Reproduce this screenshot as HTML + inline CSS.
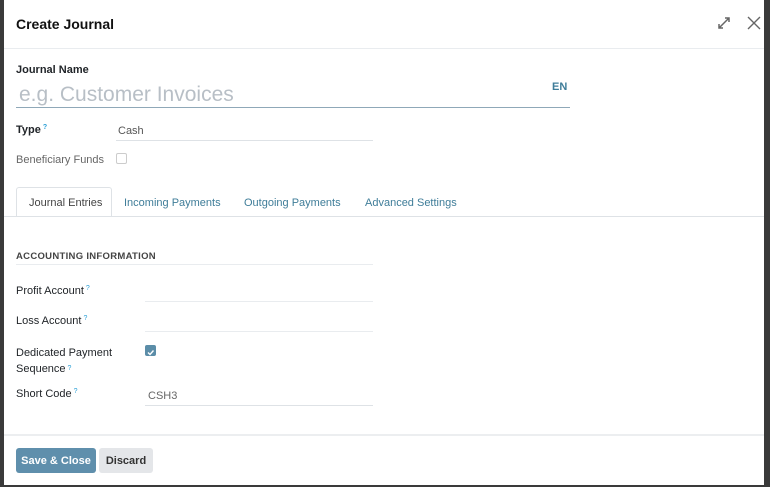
<!DOCTYPE html>
<html><head><style>
*{box-sizing:border-box;margin:0;padding:0}
body{width:770px;height:487px;background:#3a3a3a;font-family:"Liberation Sans",sans-serif;position:relative;overflow:hidden}
.m{position:absolute;left:4px;top:0;width:760px;height:485px;background:#fff}
.t{position:absolute;font-size:11px;color:#212529}
.line{position:absolute;height:1px;background:#dee2e6}
.q{color:#2a9fd6;font-size:7px;vertical-align:top;margin-left:2px}
.tab{position:absolute;top:197px;font-size:11px;color:#3f7d99}
</style></head><body>
<div class="m">
<div class="t" style="left:12px;top:16px;font-size:14px;font-weight:bold;color:#111">Create Journal</div>
<svg style="position:absolute;left:713px;top:16px" width="14" height="14" viewBox="0 0 14 14" fill="none" stroke="#666" stroke-width="1.5"><path d="M2 12L12 2M8 2h4v4M2 8v4h4"/></svg>
<svg style="position:absolute;left:743px;top:16px" width="14" height="14" viewBox="0 0 14 14" stroke="#666" stroke-width="1.4"><path d="M1 1L13 13M13 1L1 13"/></svg>
<div class="line" style="left:0;top:48px;width:760px;background:#e9ecef"></div>
<div class="t" style="left:12px;top:64px;font-weight:bold">Journal Name</div>
<div class="t" style="left:15px;top:83px;font-size:21px;color:#b8bfc6">e.g. Customer Invoices</div>
<div class="t" style="left:548px;top:81px;font-weight:bold;color:#3f7d99">EN</div>
<div class="line" style="left:12px;top:107px;width:554px;background:#8fa8b8"></div>
<div class="t" style="left:12px;top:124px;font-weight:bold">Type<span class="q">?</span></div>
<div class="t" style="left:114px;top:125px;color:#555">Cash</div>
<div class="line" style="left:112px;top:140px;width:257px"></div>
<div class="t" style="left:12px;top:154px;color:#666">Beneficiary Funds</div>
<div style="position:absolute;left:112px;top:153px;width:11px;height:11px;border:1px solid #ccc;border-radius:2px"></div>
<div style="position:absolute;left:12px;top:187px;width:96px;height:30px;border:1px solid #dee2e6;border-bottom:none;border-radius:3px 3px 0 0;background:#fff"></div>
<div class="line" style="left:0;top:216px;width:760px"></div>
<div class="tab" style="left:25px;color:#444">Journal Entries</div>
<div class="tab" style="left:120px">Incoming Payments</div>
<div class="tab" style="left:240px">Outgoing Payments</div>
<div class="tab" style="left:361px">Advanced Settings</div>
<div class="t" style="left:12px;top:251px;font-size:9.5px;font-weight:bold;color:#444;letter-spacing:.3px">ACCOUNTING INFORMATION</div>
<div class="line" style="left:12px;top:264px;width:357px;background:#e9ecef"></div>
<div class="t" style="left:12px;top:285px">Profit Account<span class="q">?</span></div>
<div class="line" style="left:141px;top:301px;width:228px;background:#e9ecef"></div>
<div class="t" style="left:12px;top:315px">Loss Account<span class="q">?</span></div>
<div class="line" style="left:141px;top:331px;width:228px;background:#e9ecef"></div>
<div class="t" style="left:12px;top:345px;line-height:16px">Dedicated Payment<br>Sequence<span class="q">?</span></div>
<div style="position:absolute;left:141px;top:345px;width:11px;height:11px;background:#5b8da8;border-radius:2px"><svg width="11" height="11" viewBox="0 0 11 11"><path d="M3 5.5l2 2 3.5-4" stroke="#fff" stroke-width="1.4" fill="none"/></svg></div>
<div class="t" style="left:12px;top:388px">Short Code<span class="q">?</span></div>
<div class="t" style="left:144px;top:390px;color:#666">CSH3</div>
<div class="line" style="left:141px;top:405px;width:228px"></div>
<div class="line" style="left:0;top:434px;width:760px;background:#eceef0;height:2px"></div>
<div style="position:absolute;left:12px;top:448px;width:80px;height:25px;background:#5f8fac;border-radius:3px;color:#fff;font-size:11px;font-weight:bold;text-align:center;line-height:27px">Save &amp; Close</div>
<div style="position:absolute;left:95px;top:448px;width:54px;height:25px;background:#e4e6e9;border-radius:3px;color:#333;font-size:11px;font-weight:bold;text-align:center;line-height:27px">Discard</div>
</div>
</body></html>
